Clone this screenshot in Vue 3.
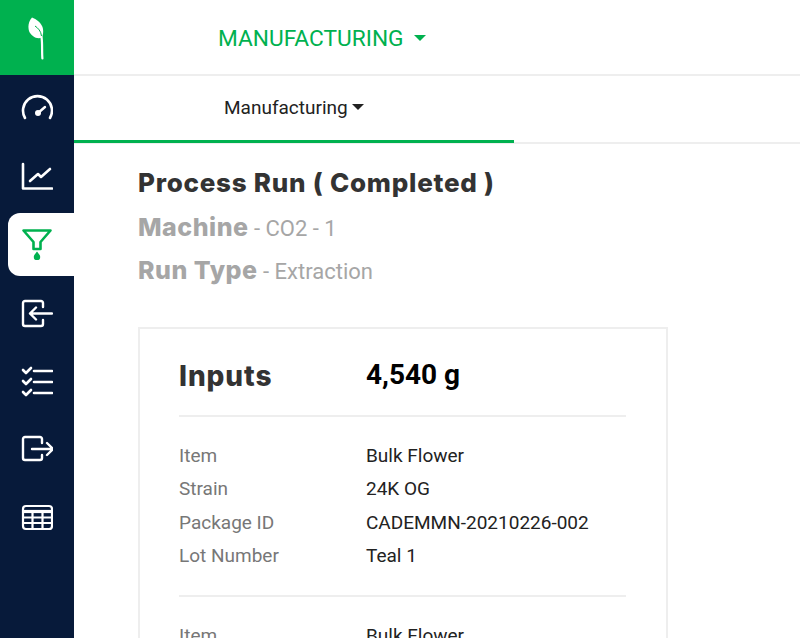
<script setup>
const inputs = [
  { label: 'Item', value: 'Bulk Flower' },
  { label: 'Strain', value: '24K OG' },
  { label: 'Package ID', value: 'CADEMMN-20210226-002' },
  { label: 'Lot Number', value: 'Teal 1' }
]
</script>

<template>
  <div class="page">
    <aside class="sidebar">
      <div class="logo">
        <svg viewBox="0 0 24 44" width="24" height="44">
          <path d="M7 1.500C11 3 17 7 18 13c.5 3 0 6-1 8.500C12 24 6 20 4 15 3 11 3 6 7 1.500z" fill="#fff" />
          <path d="M10 10c3 2 6 5 6.500 10" fill="none" stroke="#00b14f" stroke-width="1" />
          <path d="M16.500 21c1 6 .3 15 .9 21.500" fill="none" stroke="#fff" stroke-width="2.200" stroke-linecap="round" />
        </svg>
      </div>
      <nav class="menu">
        <a class="menu-item">
          <svg viewBox="0 0 32 32" fill="none" stroke="#fff" stroke-width="2.600" stroke-linecap="round">
            <path d="M4 25A14.500 14.500 0 1 1 29 25" />
            <circle cx="17" cy="20" r="3" fill="#fff" stroke="none" />
            <path d="M17 20 24 14" stroke-width="2.400" />
          </svg>
        </a>
        <a class="menu-item">
          <svg viewBox="0 0 32 32" fill="none" stroke="#fff" stroke-width="2.600" stroke-linecap="round" stroke-linejoin="round">
            <path d="M2 3v24.500h29" />
            <path d="M9 20l8-7 3 3 9-8" />
          </svg>
        </a>
        <a class="menu-item active">
          <svg viewBox="0 0 32 34" fill="none" stroke="#00b14f" stroke-width="2.600" stroke-linejoin="round">
            <path d="M2.500 2.500h27L19.500 14v7h-7v-7z" />
            <path d="M16 23.500c2.200 2.700 3.200 4 3.200 5.400a3.200 3.200 0 0 1-6.400 0c0-1.400 1-2.700 3.200-5.400z" fill="#00b14f" stroke="none" />
          </svg>
        </a>
        <a class="menu-item">
          <svg viewBox="0 0 32 32" fill="none" stroke="#fff" stroke-width="2.400" stroke-linecap="round" stroke-linejoin="round">
            <path d="M22 10V6a2 2 0 0 0-2-2H4a2 2 0 0 0-2 2v21a2 2 0 0 0 2 2h16a2 2 0 0 0 2-2v-4" />
            <path d="M31 16.500H9M15 10.500l-6 6 6 6" />
          </svg>
        </a>
        <a class="menu-item">
          <svg viewBox="0 0 32 32" fill="none" stroke="#fff" stroke-width="2.600" stroke-linecap="round" stroke-linejoin="round">
            <path d="M2 5l3 3 5-5M2 16l3 3 5-5M2 27l3 3 5-5" />
            <path d="M13 6h18M13 17h18M13 28h18" />
          </svg>
        </a>
        <a class="menu-item">
          <svg viewBox="0 0 32 32" fill="none" stroke="#fff" stroke-width="2.400" stroke-linecap="round" stroke-linejoin="round">
            <path d="M21 10V6a2 2 0 0 0-2-2H4a2 2 0 0 0-2 2v19a2 2 0 0 0 2 2h15a2 2 0 0 0 2-2v-3" />
            <path d="M11 16h21M26 10l6 6-6 6" />
          </svg>
        </a>
        <a class="menu-item">
          <svg viewBox="0 0 32 32" fill="none" stroke="#fff" stroke-width="2.200" stroke-linejoin="round">
            <rect x="2" y="5" width="29" height="23" rx="3" />
            <path d="M2 10.500h29" stroke-width="3.200" />
            <path d="M2 16.500h29M2 22h29M11.500 11v17M21.500 11v17" />
          </svg>
        </a>
      </nav>
    </aside>

    <main class="main">
      <header class="topbar">
        <span class="topbar-title">MANUFACTURING</span>
        <span class="topbar-caret"></span>
      </header>
      <div class="tabs">
        <div class="tab">
          <span>Manufacturing</span>
          <span class="tab-caret"></span>
        </div>
      </div>

      <section class="content">
        <h1 class="run-title">Process Run ( Completed )</h1>
        <div class="run-meta"><b>Machine</b> - CO2 - 1</div>
        <div class="run-meta"><b>Run Type</b> - Extraction</div>

        <div class="card">
          <div class="card-head">
            <span class="card-title">Inputs</span>
            <span class="card-total">4,540 g</span>
          </div>
          <div class="group">
            <div v-for="row in inputs" :key="row.label" class="row">
              <span class="row-label">{{ row.label }}</span>
              <span class="row-value">{{ row.value }}</span>
            </div>
          </div>
          <div class="group">
            <div v-for="row in inputs" :key="row.label" class="row">
              <span class="row-label">{{ row.label }}</span>
              <span class="row-value">{{ row.value }}</span>
            </div>
          </div>
        </div>
      </section>
    </main>
  </div>
</template>

<style>
html, body {
  height: 100%;
  overflow: hidden;
}
</style>

<style scoped>
.page {
  display: flex;
  height: 638px;
  overflow: hidden;
  background: #fff;
  font-family: Roboto, "Liberation Sans", sans-serif;
}

.sidebar {
  width: 74px;
  flex-shrink: 0;
  background: #071a3a;
}

.logo {
  height: 75px;
  background: #00b14f;
  display: flex;
  align-items: center;
  justify-content: center;
}

.menu {
  display: flex;
  flex-direction: column;
  padding: 0 0 0 8px;
}

.menu-item {
  height: 68px;
  display: flex;
  align-items: center;
  justify-content: center;
  padding-right: 8px;
}

.menu-item svg {
  width: 32px;
  height: 32px;
}

.menu-item.active {
  height: 63px;
  margin: 2px 0 3px;
  background: #fff;
  border-radius: 12px 0 0 12px;
}

.menu-item.active svg {
  height: 34px;
}

.main {
  flex: 1;
  min-width: 0;
}

.topbar {
  height: 76px;
  box-sizing: border-box;
  padding: 2px 0 0 144px;
  display: flex;
  align-items: center;
  color: #00b14f;
  border-bottom: 2px solid #eee;
}

.topbar-title {
  font-size: 22.700px;
}

.topbar-caret {
  margin-left: 10px;
  border: 6px solid transparent;
  border-top-color: #00b14f;
  border-bottom: none;
}

.tabs {
  height: 68px;
  box-sizing: border-box;
  border-bottom: 2px solid #eee;
}

.tab {
  width: 440px;
  height: 67px;
  box-sizing: border-box;
  padding: 0 0 2px 150px;
  display: flex;
  align-items: center;
  font-size: 19px;
  color: #222;
  border-bottom: 3px solid #00b14f;
}

.tab-caret {
  margin-left: 4px;
  border: 6px solid transparent;
  border-top-color: #222;
  border-bottom: none;
}

.content {
  padding: 23px 0 0 64px;
}

.run-title {
  margin: 0 0 14px;
  font-family: Inter, sans-serif;
  font-size: 26px;
  line-height: 32px;
  font-weight: 800;
  letter-spacing: 0.75px;
  color: #333;
}

.run-meta {
  font-size: 22px;
  line-height: 32px;
  margin-bottom: 11px;
  color: #a6a6a6;
}

.run-meta b {
  font-family: Inter, sans-serif;
  font-size: 25px;
  line-height: 1;
  font-weight: 800;
  letter-spacing: 0.5px;
}

.card {
  width: 530px;
  box-sizing: border-box;
  margin-top: 39px;
  padding: 0 40px 0 39px;
  border: 2px solid #eee;
}

.card-head {
  height: 86px;
  box-sizing: border-box;
  padding-top: 4px;
  display: flex;
  align-items: center;
}

.card-title {
  width: 187px;
  padding-top: 4px;
  font-family: Inter, sans-serif;
  font-size: 28px;
  font-weight: 800;
  letter-spacing: 0.9px;
  color: #333;
}

.card-total {
  font-size: 28px;
  font-weight: 700;
  color: #000;
}

.group {
  border-top: 2px solid #eee;
  padding: 22px 0 22px;
}

.row {
  display: flex;
  font-size: 19px;
  line-height: 33.400px;
}

.row-label {
  width: 187px;
  color: #777;
}

.row-value {
  color: #222;
}
</style>
